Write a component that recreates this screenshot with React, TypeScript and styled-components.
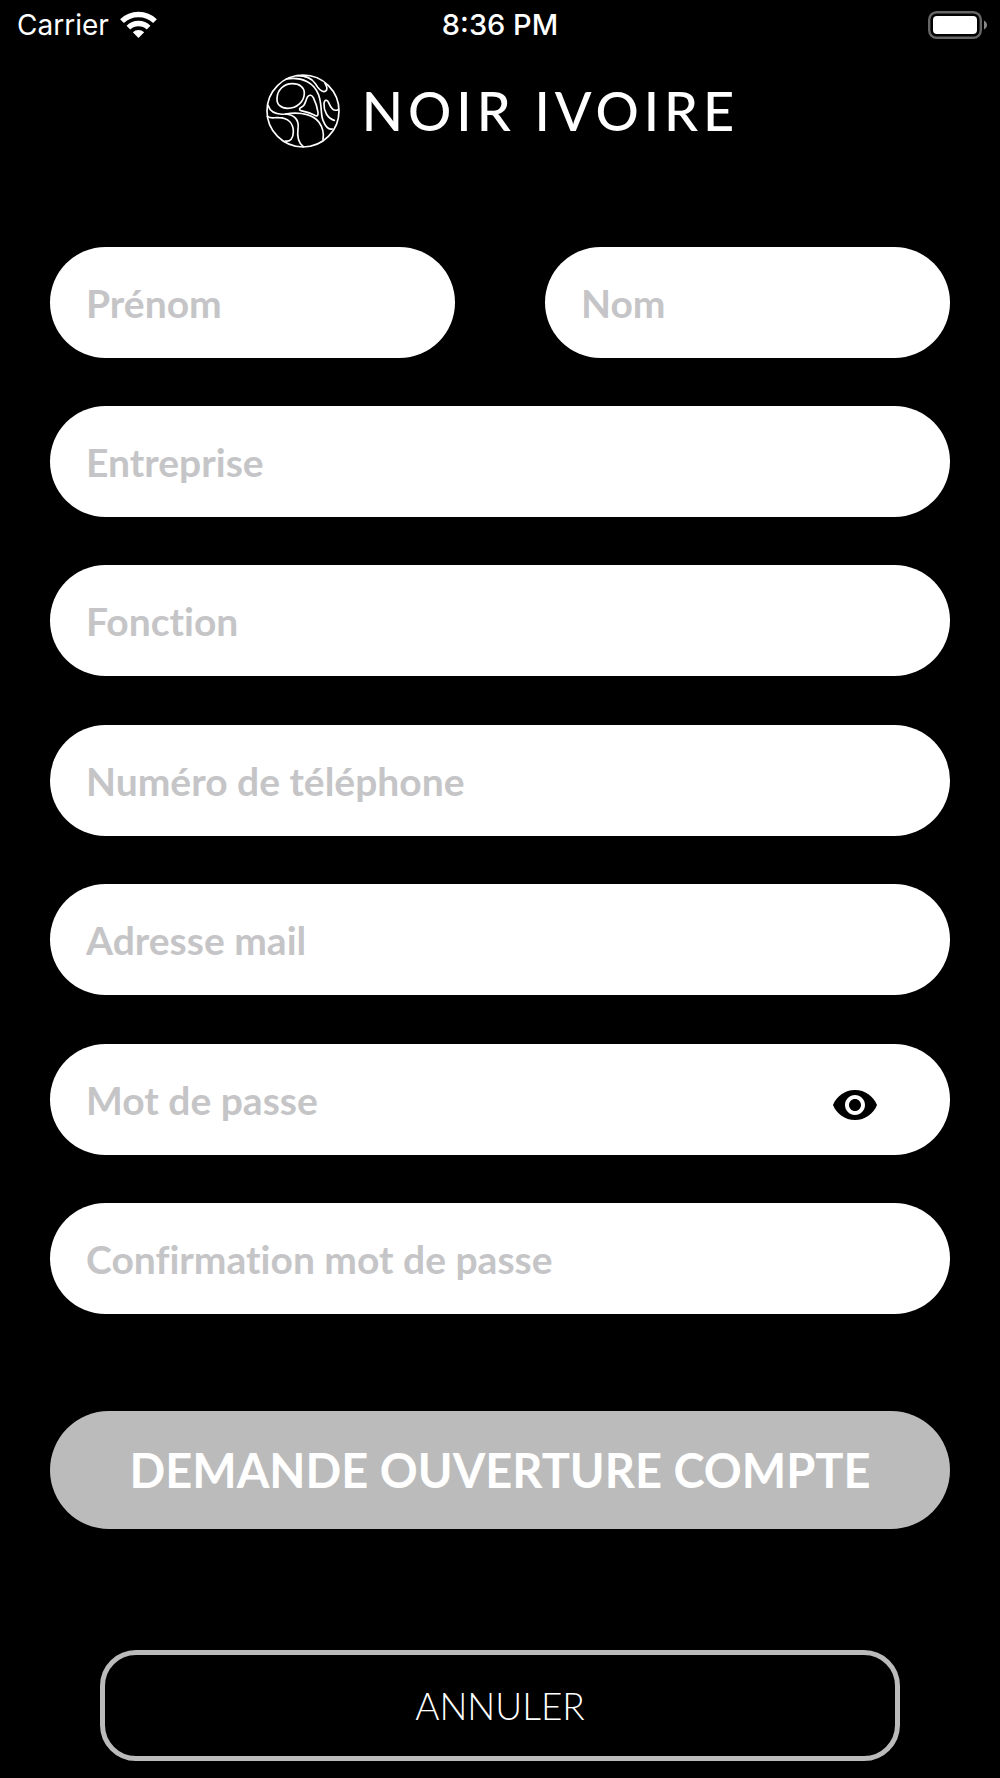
import React, { useState } from "react";
import styled, { createGlobalStyle } from "styled-components";

const GlobalStyle = createGlobalStyle`
  *, *::before, *::after { box-sizing: border-box; }
  html { background: #000; }
  body {
    margin: 0;
    background: #000;
    color: #fff;
    font-family: Lato, "Liberation Sans", sans-serif;
  }
  button, input { font: inherit; }
`;

const Screen = styled.div`
  min-height: 100vh;
  display: flex;
  flex-direction: column;
  background: #000;
`;

const StatusBar = styled.div`
  display: grid;
  grid-template-columns: 1fr auto 1fr;
  align-items: center;
  height: 50px;
  padding: 0 13px;
  font-family: Inter, "Liberation Sans", sans-serif;
  font-size: 28px;
  line-height: 34px;
`;

const Carrier = styled.div`
  display: flex;
  align-items: center;
  gap: 11px;
  padding-left: 4px;
`;

const Clock = styled.time`
  font-size: 29px;
  font-weight: 500;
`;

const BatterySlot = styled.div`
  display: flex;
  justify-content: flex-end;
`;

const Brand = styled.header`
  display: flex;
  align-items: center;
  justify-content: center;
  gap: 22px;
  margin-top: 24px;
  padding-left: 5px;
`;

const BrandName = styled.h1`
  margin: 0;
  font-size: 54px;
  font-weight: 500;
  line-height: 74px;
  letter-spacing: 5px;
`;

const Form = styled.form`
  display: flex;
  flex-direction: column;
  margin-top: 99px;
  padding: 0 50px 17px;
`;

const Sections = styled.div`
  display: flex;
  flex-direction: column;
  gap: 49px;
`;

const Section = styled.div`
  display: flex;
  flex-direction: column;
  gap: 48px;
`;

const NameRow = styled.div`
  display: grid;
  grid-template-columns: 1fr 1fr;
  gap: 90px;
`;

const Input = styled.input`
  display: block;
  width: 100%;
  min-width: 0;
  height: 111px;
  padding: 0 36px;
  border: 0;
  border-radius: 56px;
  outline-offset: 4px;
  background: #fff;
  color: #000;
  font-size: 39px;
  font-weight: 700;
  font-variant-ligatures: no-common-ligatures;

  &::placeholder {
    color: #c5c5c7;
    opacity: 1;
  }
`;

const PasswordField = styled.div`
  position: relative;
`;

const RevealButton = styled.button`
  position: absolute;
  top: 37px;
  right: 71px;
  display: flex;
  padding: 0;
  border: 0;
  background: none;
  color: #000;
  cursor: pointer;
`;

const Submit = styled.button`
  height: 118px;
  margin-top: 97px;
  border: 0;
  border-radius: 59px;
  background: #bbb;
  color: #fff;
  font-size: 47px;
  font-weight: 700;
  cursor: pointer;
`;

const Cancel = styled.button`
  height: 111px;
  margin: 121px 50px 0;
  border: 5px solid #bbb;
  border-radius: 36px;
  background: #000;
  color: #fff;
  font-size: 37px;
  font-weight: 300;
  cursor: pointer;
`;

function WifiIcon() {
  return (
    <svg width="37" height="28" viewBox="0 0 37 28" aria-hidden="true">
      <g fill="none" stroke="#fff" strokeWidth="5.4">
        <path d="M2 10.2a23.5 23.5 0 0 1 33 0" />
        <path d="M8.4 16.6a14.5 14.5 0 0 1 20.2 0" />
      </g>
      <path fill="#fff" d="M12.8 21.2a8.2 8.2 0 0 1 11.4 0L18.5 27z" />
    </svg>
  );
}

function BatteryIcon() {
  return (
    <svg width="59" height="28" viewBox="0 0 59 28" aria-hidden="true">
      <rect x="1.2" y="1.2" width="51.6" height="25.6" rx="7.5" fill="none" stroke="#666" strokeWidth="2.4" />
      <rect x="5" y="5" width="44" height="18" rx="4" fill="#fff" />
      <path d="M56 9.5c4 2 4 7 0 9z" fill="#888" />
    </svg>
  );
}

function Globe() {
  return (
    <svg width="74" height="74" viewBox="33 25 222 222" aria-hidden="true">
      <g fill="none" stroke="#fff" strokeWidth="5" strokeLinejoin="round" strokeLinecap="round">
        <circle cx="144" cy="136" r="108" />
        <path d="M66 98C67 72 87 54 112 54C135 54 148 66 148 82C148 108 126 128 98 128C78 128 65 117 66 98Z" />
        <path d="M158 93C163 86 171 88 175 96C181 108 187 126 189 140C190 150 186 153 179 149C166 141 150 138 138 135C131 133 133 128 139 125C153 118 150 106 158 93Z" />
        <path d="M94 40C142 32 178 52 191 88C202 120 196 145 204 164C212 184 222 193 232 190" />
        <path d="M126 30C158 30 172 40 181 54C190 69 202 82 212 76C219 71 215 61 210 53" />
        <path d="M249 132C236 138 228 128 222 113C217 100 208 101 207 114C206 136 217 158 238 164" />
        <path d="M39 119C46 140 65 148 91 145C143 137 178 150 192 170C204 187 207 204 204 221" />
        <path d="M37 152C48 160 57 155 71 156C101 157 115 174 115 198C115 218 106 229 91 226" />
        <path d="M91 145C119 147 133 164 129 188C126 212 130 232 145 243" />
      </g>
    </svg>
  );
}

function EyeIcon() {
  return (
    <svg width="48" height="48" viewBox="0 0 24 24" fill="currentColor" aria-hidden="true">
      <path d="M12 4.5C7 4.5 2.73 7.61 1 12c1.73 4.39 6 7.5 11 7.5s9.27-3.11 11-7.5c-1.73-4.39-6-7.5-11-7.5zM12 17c-2.76 0-5-2.24-5-5s2.24-5 5-5 5 2.24 5 5-2.24 5-5 5zm0-8c-1.66 0-3 1.34-3 3s1.34 3 3 3 3-1.34 3-3-1.34-3-3-3z" />
    </svg>
  );
}

function Field({ label, type = "text", name }: { label: string; type?: string; name: string }) {
  return <Input type={type} name={name} placeholder={label} aria-label={label} />;
}

export default function App() {
  const [revealed, setRevealed] = useState(false);

  return (
    <>
      <GlobalStyle />
      <Screen>
        <StatusBar>
          <Carrier>
            Carrier
            <WifiIcon />
          </Carrier>
          <Clock>8:36 PM</Clock>
          <BatterySlot>
            <BatteryIcon />
          </BatterySlot>
        </StatusBar>
        <Brand>
          <Globe />
          <BrandName>NOIR IVOIRE</BrandName>
        </Brand>
        <Form onSubmit={(event) => event.preventDefault()}>
          <Sections>
            <Section>
              <NameRow>
                <Field label="Prénom" name="firstName" />
                <Field label="Nom" name="lastName" />
              </NameRow>
              <Field label="Entreprise" name="company" />
              <Field label="Fonction" name="role" />
            </Section>
            <Section>
              <Field label="Numéro de téléphone" name="phone" type="tel" />
              <Field label="Adresse mail" name="email" type="email" />
            </Section>
            <Section>
              <PasswordField>
                <Field label="Mot de passe" name="password" type={revealed ? "text" : "password"} />
                <RevealButton
                  type="button"
                  aria-label="Afficher le mot de passe"
                  aria-pressed={revealed}
                  onClick={() => setRevealed(!revealed)}
                >
                  <EyeIcon />
                </RevealButton>
              </PasswordField>
              <Field label="Confirmation mot de passe" name="passwordConfirmation" type="password" />
            </Section>
          </Sections>
          <Submit type="submit">DEMANDE OUVERTURE COMPTE</Submit>
          <Cancel type="button">ANNULER</Cancel>
        </Form>
      </Screen>
    </>
  );
}
